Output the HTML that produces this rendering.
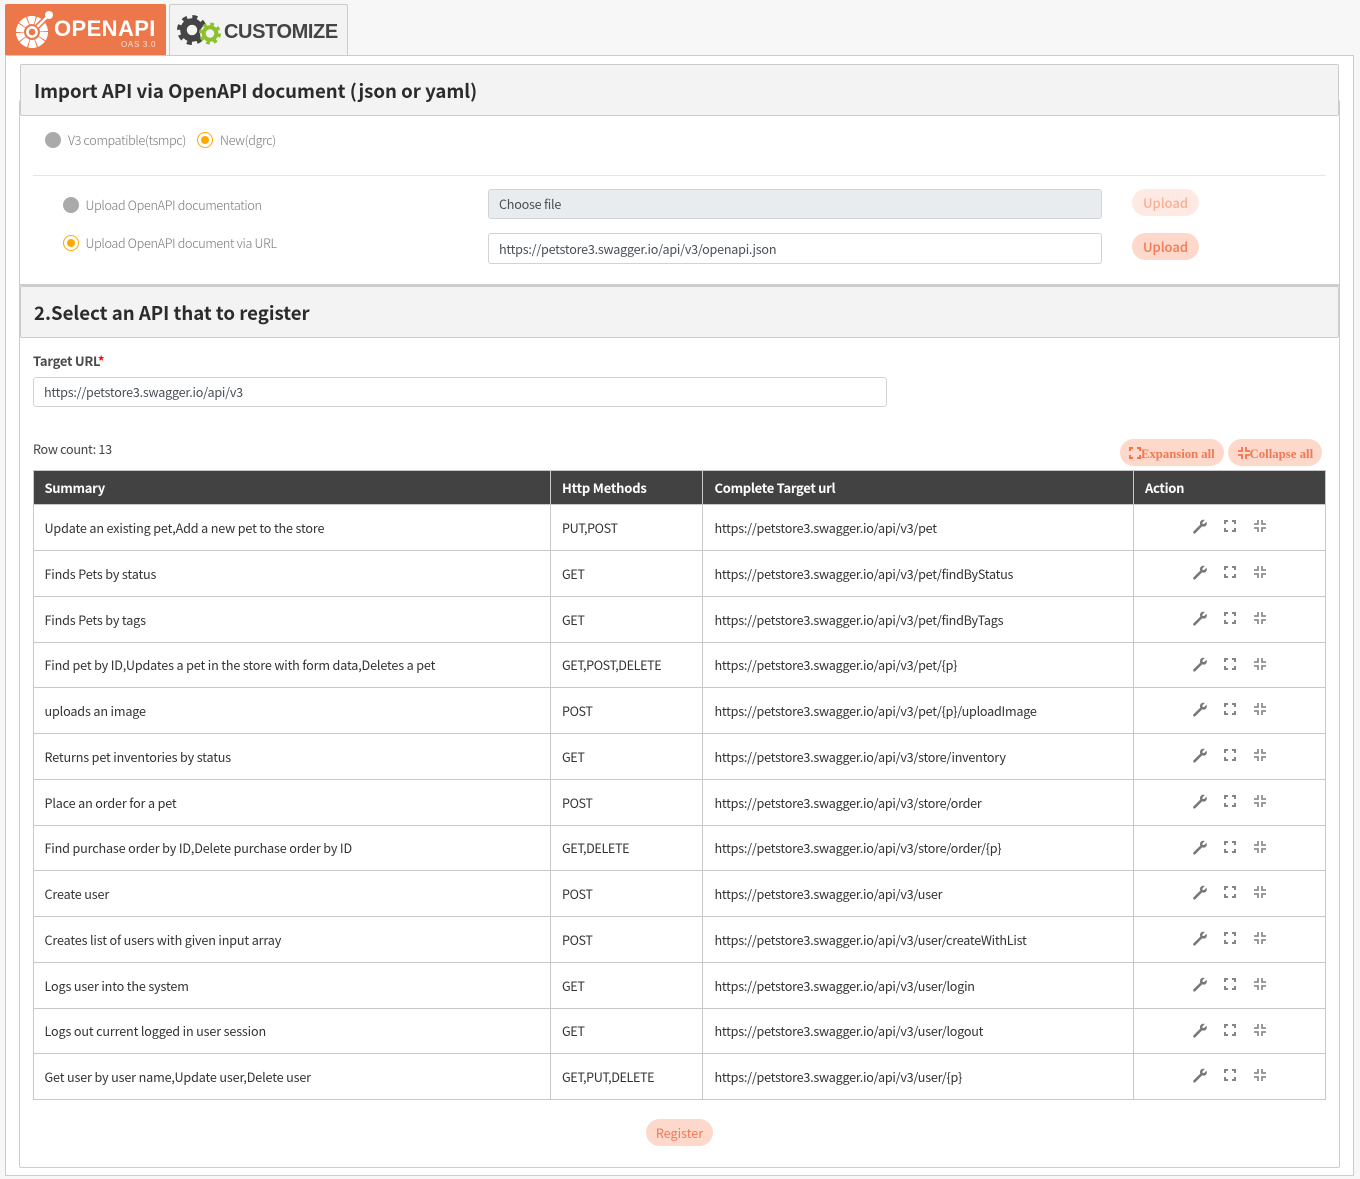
<!DOCTYPE html>
<html><head><meta charset="utf-8"><title>OpenAPI</title>
<style>
html,body{margin:0;padding:0}
body{width:1360px;height:1179px;background:#f7f7f7;position:relative;overflow:hidden;font-family:"Noto Sans CJK KR","Liberation Sans",sans-serif;font-size:12.6px;color:#333}
div,span.a,svg.a{position:absolute;box-sizing:border-box}
.t{white-space:nowrap;line-height:20px;height:20px}
.g{color:#777;font-weight:300;letter-spacing:-.3px}
.hd{background:#f3f3f3;border:1px solid #ccc;border-radius:2px;font-weight:700;font-size:18.6px;color:#2b2b2b;padding-left:13px}
.inp{background:#fff;border:1px solid #ced4da;border-radius:3px;padding-left:10px;font-size:12.6px;color:#495057;letter-spacing:-.24px}
.btn{background:#fdd8cb;border-radius:14px;color:#ef7a55;text-align:center;line-height:27px;font-size:13px;font-weight:500}
.rg{width:16px;height:16px;border-radius:50%;background:#aaa}
.ro{width:16px;height:16px;border-radius:50%;border:1.5px solid #ffa800;background:#fff}
.ro:after{content:"";position:absolute;left:2.5px;top:2.5px;width:8px;height:8px;border-radius:50%;background:#ffa800}
.ln{background:#c8c8c8;height:1px;left:33px;width:1293px}
.vl{background:#c8c8c8;width:1px;top:504px;height:596px}
.th{color:#fff;font-weight:700;font-size:13px;top:478px;letter-spacing:-.3px}
.c1{left:44.5px;letter-spacing:-.15px}.c2{left:562px;letter-spacing:-.38px}.c3{left:714.5px;letter-spacing:-.24px}
</style></head><body>
<svg width="0" height="0" style="position:absolute"><defs>
<symbol id="w" viewBox="0 0 16 16"><path fill="#777" d="M14.5 3.2L12.2 5.5L10.5 5.5L10.5 3.8L12.8 1.5C10.8.8 8.6 1.6 8.1 3.6C7.9 4.5 8 5.4 8.3 6.1L1.6 12.8C1 13.4 1 14.2 1.5 14.7C2 15.2 2.8 15.2 3.4 14.6L10.1 7.9C10.9 8.2 11.8 8.2 12.7 8C14.6 7.3 15.3 5.2 14.5 3.2Z"/></symbol>
<symbol id="e" viewBox="0 0 12 12"><path fill="none" stroke="#858585" stroke-width="2" d="M1 4V1H4M8 1H11V4M11 8V11H8M4 11H1V8"/></symbol>
<symbol id="c" viewBox="0 0 12 12"><path fill="none" stroke="#8f8f8f" stroke-width="1.8" d="M0 4H4V0M8 0V4H12M12 8H8V12M4 12V8H0"/></symbol>
<symbol id="eo" viewBox="0 0 12 12"><path fill="none" stroke="#f2734c" stroke-width="2" d="M1 4V1H4M8 1H11V4M11 8V11H8M4 11H1V8"/></symbol>
<symbol id="co" viewBox="0 0 12 12"><path fill="none" stroke="#f2734c" stroke-width="1.8" d="M0 4H4V0M8 0V4H12M12 8H8V12M4 12V8H0"/></symbol>
</defs></svg>

<!-- tabs -->
<div style="left:5px;top:4px;width:161px;height:52px;background:#ec774b;border-radius:2px 2px 0 0"></div>
<svg class="a" style="left:5px;top:4px" width="60" height="52" viewBox="0 0 60 52">
<circle cx="27" cy="28" r="12" fill="none" stroke="#fff" stroke-width="8" stroke-dasharray="6.6 .9"/>
<path d="M27 28L44 11" stroke="#ec774b" stroke-width="5.5"/>
<path d="M27 28L44 11" stroke="#fff" stroke-width="2.6"/>
<circle cx="44" cy="11" r="4" fill="#fff"/>
<circle cx="27" cy="28" r="7.5" fill="#ec774b"/>
<circle cx="27" cy="28" r="4.6" fill="#ec774b" stroke="#fff" stroke-width="2.6"/>
</svg>
<div class="t" style="left:54px;top:18px;color:#fff;font:700 22px/22px 'Liberation Sans',sans-serif;letter-spacing:.4px">OPENAPI</div>
<div class="t" style="left:121px;top:35px;color:#fbe0d5;font:8px/20px 'Liberation Sans',sans-serif;letter-spacing:.7px">OAS 3.0</div>
<div style="left:169px;top:4px;width:179px;height:52px;background:#f3f3f3;border:1px solid #ccc;border-bottom:0;border-radius:2px 2px 0 0"></div>
<svg class="a" style="left:176px;top:10px" width="50" height="40" viewBox="0 0 50 40">
<circle cx="16" cy="20" r="13" fill="none" stroke="#444" stroke-width="4" stroke-dasharray="5 5.2"/>
<circle cx="16" cy="20" r="8.5" fill="none" stroke="#444" stroke-width="6.5"/>
<circle cx="34" cy="23.5" r="10" fill="#f3f3f3"/>
<circle cx="34" cy="23.5" r="9.5" fill="none" stroke="#8cc02c" stroke-width="3" stroke-dasharray="3.7 3.76"/>
<circle cx="34" cy="23.5" r="6.3" fill="#f3f3f3" stroke="#8cc02c" stroke-width="4"/>
</svg>
<div class="t" style="left:224px;top:22px;color:#444;font:700 20px/20px 'Liberation Sans',sans-serif;letter-spacing:-.4px">CUSTOMIZE</div>

<!-- outer -->
<div style="left:5px;top:55px;width:1349px;height:1121px;background:#fff;border:1px solid #ccc"></div>
<div style="left:19px;top:100px;width:1321px;height:1068px;background:#fff;border:1px solid #ccc;border-radius:2px"></div>
<div style="left:19px;top:284px;width:1321px;height:2px;background:#ccc"></div>

<div class="hd" style="left:20px;top:64px;width:1319px;height:52px;line-height:52px">Import API via OpenAPI document (json or yaml)</div>
<div class="rg" style="left:45px;top:132px"></div>
<div class="t g" style="left:68px;top:130px">V3 compatible(tsmpc)</div>
<div class="ro" style="left:197px;top:132px"></div>
<div class="t g" style="left:220px;top:130px">New(dgrc)</div>
<div style="left:33px;top:175px;width:1293px;height:1px;background:#e6e6e6"></div>

<div class="rg" style="left:63px;top:197px"></div>
<div class="t g" style="left:85.5px;top:195px">Upload OpenAPI documentation</div>
<div class="ro" style="left:63px;top:235px"></div>
<div class="t g" style="left:85.5px;top:233px">Upload OpenAPI document via URL</div>
<div class="inp" style="left:488px;top:189px;width:614px;height:30px;background:#e9ecef;line-height:28px">Choose file</div>
<div class="inp" style="left:488px;top:233px;width:614px;height:31px;line-height:30px">https://petstore3.swagger.io/api/v3/openapi.json</div>
<div class="btn" style="left:1132px;top:189px;width:67px;height:27px;background:#feeae3;color:#f8ae95">Upload</div>
<div class="btn" style="left:1132px;top:233px;width:67px;height:27px">Upload</div>

<div class="hd" style="left:20px;top:286px;width:1319px;height:52px;line-height:51px">2.Select an API that to register</div>
<div class="t" style="left:33px;top:351px;font-weight:700;color:#4a4a4a;font-size:13px;letter-spacing:-.25px">Target URL<span style="color:#f00">*</span></div>
<div class="inp" style="left:33px;top:377px;width:854px;height:30px;line-height:28px">https://petstore3.swagger.io/api/v3</div>
<div class="t" style="left:33px;top:439px;color:#444;letter-spacing:-.3px">Row count: 13</div>

<div class="btn" style="left:1120px;top:439px;width:104px;height:27px;font:700 12.7px/30px 'Liberation Serif',serif;padding-left:21px;text-align:left">Expansion all</div>
<svg class="a" style="left:1129px;top:447px" width="12" height="12"><use href="#eo"/></svg>
<div class="btn" style="left:1228px;top:439px;width:94px;height:27px;font:700 12.8px/30px 'Liberation Serif',serif;padding-left:21.5px;text-align:left">Collapse all</div>
<svg class="a" style="left:1238px;top:447px" width="12" height="12"><use href="#co"/></svg>

<!-- table -->
<div style="left:33px;top:470px;width:1293px;height:35px;background:#424242;border:1px solid #c8c8c8"></div>
<div class="vl" style="left:550px;top:471px;height:629px"></div>
<div class="vl" style="left:702px;top:471px;height:629px"></div>
<div class="vl" style="left:1133px;top:471px;height:629px"></div>
<div class="vl" style="left:33px"></div><div class="vl" style="left:1325px"></div>
<div class="t th c1" style="letter-spacing:-.3px">Summary</div><div class="t th c2" style="letter-spacing:-.2px">Http Methods</div><div class="t th c3" style="letter-spacing:-.3px">Complete Target url</div><div class="t th" style="left:1145px">Action</div>

<div class="ln" style="top:550px"></div><div class="ln" style="top:596px"></div><div class="ln" style="top:642px"></div><div class="ln" style="top:687px"></div><div class="ln" style="top:733px"></div><div class="ln" style="top:779px"></div><div class="ln" style="top:825px"></div><div class="ln" style="top:870px"></div><div class="ln" style="top:916px"></div><div class="ln" style="top:962px"></div><div class="ln" style="top:1008px"></div><div class="ln" style="top:1053px"></div><div class="ln" style="top:1099px"></div>

<div class="t c1" style="top:518px">Update an existing pet,Add a new pet to the store</div><div class="t c2" style="top:518px">PUT,POST</div><div class="t c3" style="top:518px">https://petstore3.swagger.io/api/v3/pet</div>
<div class="t c1" style="top:564px">Finds Pets by status</div><div class="t c2" style="top:564px">GET</div><div class="t c3" style="top:564px">https://petstore3.swagger.io/api/v3/pet/findByStatus</div>
<div class="t c1" style="top:610px">Finds Pets by tags</div><div class="t c2" style="top:610px">GET</div><div class="t c3" style="top:610px">https://petstore3.swagger.io/api/v3/pet/findByTags</div>
<div class="t c1" style="top:655px">Find pet by ID,Updates a pet in the store with form data,Deletes a pet</div><div class="t c2" style="top:655px">GET,POST,DELETE</div><div class="t c3" style="top:655px">https://petstore3.swagger.io/api/v3/pet/{p}</div>
<div class="t c1" style="top:701px">uploads an image</div><div class="t c2" style="top:701px">POST</div><div class="t c3" style="top:701px">https://petstore3.swagger.io/api/v3/pet/{p}/uploadImage</div>
<div class="t c1" style="top:747px">Returns pet inventories by status</div><div class="t c2" style="top:747px">GET</div><div class="t c3" style="top:747px">https://petstore3.swagger.io/api/v3/store/inventory</div>
<div class="t c1" style="top:793px">Place an order for a pet</div><div class="t c2" style="top:793px">POST</div><div class="t c3" style="top:793px">https://petstore3.swagger.io/api/v3/store/order</div>
<div class="t c1" style="top:838px">Find purchase order by ID,Delete purchase order by ID</div><div class="t c2" style="top:838px">GET,DELETE</div><div class="t c3" style="top:838px">https://petstore3.swagger.io/api/v3/store/order/{p}</div>
<div class="t c1" style="top:884px">Create user</div><div class="t c2" style="top:884px">POST</div><div class="t c3" style="top:884px">https://petstore3.swagger.io/api/v3/user</div>
<div class="t c1" style="top:930px">Creates list of users with given input array</div><div class="t c2" style="top:930px">POST</div><div class="t c3" style="top:930px">https://petstore3.swagger.io/api/v3/user/createWithList</div>
<div class="t c1" style="top:976px">Logs user into the system</div><div class="t c2" style="top:976px">GET</div><div class="t c3" style="top:976px">https://petstore3.swagger.io/api/v3/user/login</div>
<div class="t c1" style="top:1021px">Logs out current logged in user session</div><div class="t c2" style="top:1021px">GET</div><div class="t c3" style="top:1021px">https://petstore3.swagger.io/api/v3/user/logout</div>
<div class="t c1" style="top:1067px">Get user by user name,Update user,Delete user</div><div class="t c2" style="top:1067px">GET,PUT,DELETE</div><div class="t c3" style="top:1067px">https://petstore3.swagger.io/api/v3/user/{p}</div>

<svg class="a" style="left:1190px;top:510px" width="80" height="580" viewBox="0 0 80 580">
<g id="r"><use href="#w" x="2" y="8.5" width="16" height="16"/><use href="#e" x="34" y="10" width="12" height="12"/><use href="#c" x="64" y="10" width="12" height="12"/></g>
<use href="#r" y="46"/><use href="#r" y="92"/><use href="#r" y="138"/><use href="#r" y="183"/><use href="#r" y="229"/><use href="#r" y="275"/><use href="#r" y="321"/><use href="#r" y="366"/><use href="#r" y="412"/><use href="#r" y="458"/><use href="#r" y="504"/><use href="#r" y="549"/>
</svg>

<div class="btn" style="left:646px;top:1119px;width:67px;height:27px;font-weight:400;font-size:12.6px">Register</div>
</body></html>
